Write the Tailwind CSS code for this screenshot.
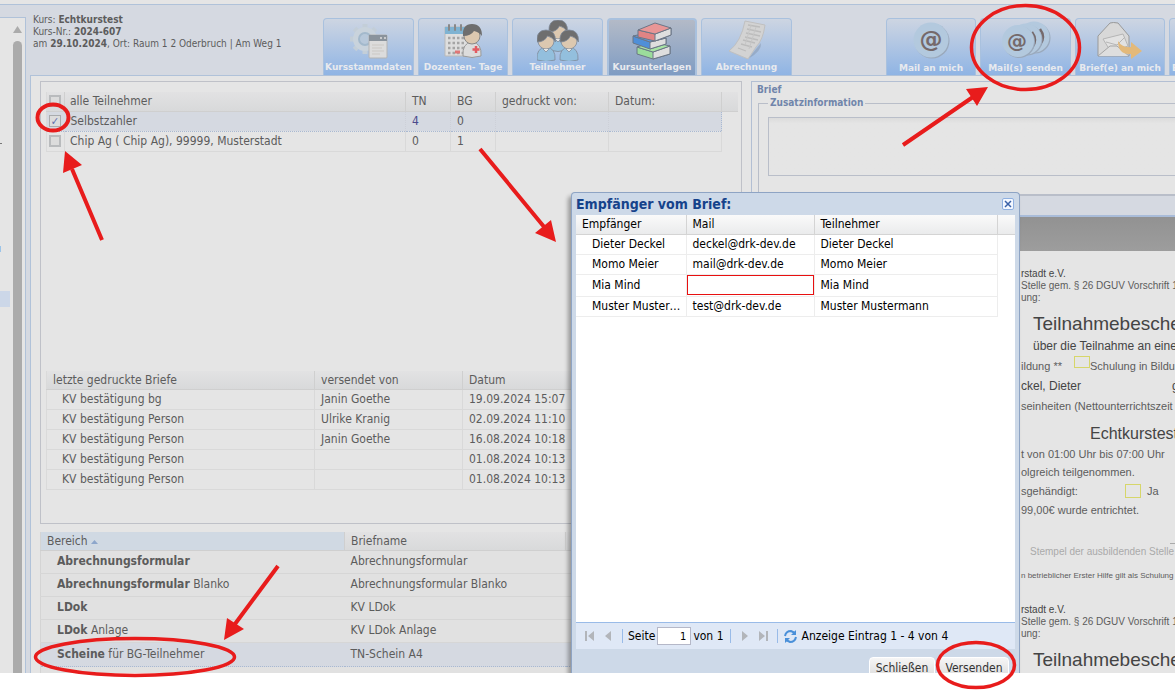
<!DOCTYPE html>
<html lang="de">

<head>
    <meta charset="UTF-8">
    <meta name="viewport" content="width=device-width, initial-scale=1.0">
    <title>Kursunterlagen</title>
    <script src="https://cdn.jsdelivr.net/npm/@tailwindcss/browser@4"></script>
</head>

<body class="bg-white font-['DejaVu_Sans_Condensed','DejaVu_Sans',sans-serif] text-xs text-[#5c5c5c] overflow-hidden">
    <div class="relative flex flex-col h-[calc(100vh-17px)] overflow-hidden bg-[#d5d9e1]">
        <div class="h-[5px] shrink-0 bg-[#e5e5e5] border-b border-[#b0c2d9]"></div>

        <div class="flex flex-1 min-h-0">
            <!-- Navigation -->
            <aside class="flex justify-between w-[26px] shrink-0 mt-3 bg-[#e5e5e5] border-t border-r border-[#b0c2d9]">
                <div class="w-[10px]">
                    <div class="w-[2px] h-px mt-[125px] bg-[#777]"></div>
                    <div class="w-px h-[6px] mt-[102px] bg-[#9cc4e8]"></div>
                    <div class="h-4 mt-[39px] bg-[#ccd7e8]"></div>
                </div>
                <div class="flex flex-col w-[9px] mr-[3px] pt-2">
                    <svg class="w-[9px] h-[7px]" viewBox="0 0 9 7"><path d="M4.5 0 L9 7 H0Z" fill="#ababab" /></svg>
                    <div class="flex-1 mt-2 bg-[#ababab] rounded-t-full"></div>
                </div>
            </aside>

            <main class="flex flex-col flex-1 min-w-0 pl-1">
                <header class="flex h-[70px] shrink-0 items-end overflow-hidden">
                    <div class="w-[293px] shrink-0 self-start pt-[9px] pl-[3px] text-[10px] leading-3 whitespace-nowrap">
                        <p>Kurs: <b>Echtkurstest</b></p>
                        <p>Kurs-Nr.: <b>2024-607</b></p>
                        <p>am <b>29.10.2024</b>, Ort: Raum 1 2 Oderbruch | Am Weg 1</p>
                    </div>
                    <nav class="flex shrink-0 gap-1 font-['DejaVu_Sans',sans-serif] font-bold text-[9px] leading-3 text-[#e8eaee]">
                        <button class="flex flex-col items-center justify-between w-[91px] h-[57px] pt-1 pb-[2px] border border-b-0 border-[#a9c1de] rounded-t-sm bg-linear-to-b from-[#cdd5e2] to-[#8fb4e4] whitespace-nowrap">
                            <svg class="w-[38px] h-[36px]" viewBox="0 0 38 36">
                                <path d="M15 1v30M0 16h30M4.500 5.500l21 21M25.500 5.500l-21 21" stroke="#c3ced8" stroke-width="5" />
                                <circle cx="15" cy="16" r="9" fill="#b7c8da" stroke="#c9d3dc" stroke-width="6" />
                                <circle cx="15" cy="16" r="6" fill="none" stroke="#a3b9cc" stroke-width="2" />
                                <rect x="19" y="12" width="18" height="23" rx="1" fill="#dcdcdc" stroke="#b4b4b4" />
                                <path d="M19 12h18v6H19z" fill="#8a939c" />
                                <path d="M30 15h2m2 0h2" stroke="#ddd" stroke-width="1.5" />
                                <path d="M22 22h12M22 25h10M22 28h12M22 31h8" stroke="#cbc8c4" />
                            </svg>
                            <span>Kursstammdaten</span>
                        </button>
                        <button class="flex flex-col items-center justify-between w-[90px] h-[57px] pt-1 pb-[2px] border border-b-0 border-[#a9c1de] rounded-t-sm bg-linear-to-b from-[#cdd5e2] to-[#8fb4e4] whitespace-nowrap">
                            <svg class="w-[38px] h-[36px]" viewBox="0 0 38 36">
                                <path d="M1 4h24v29H1z" fill="#dedede" stroke="#b9b9b9" />
                                <path d="M1 4h24v7H1z" fill="#7fb3d2" />
                                <path d="M5 2v5M11 2v5M17 2v5" stroke="#888" stroke-width="2" stroke-linecap="round" />
                                <path d="M4 15h16M4 20h16M4 25h16M4 30h16" stroke="#a5a5a5" stroke-width="2.500" stroke-dasharray="2.5 2" />
                                <path d="M11 29h5" stroke="#e07676" stroke-width="3" />
                                <path d="M19 33q-1-13 9-14 10 1 9 14-9 3-18 0z" fill="#dcdcdc" stroke="#999" />
                                <circle cx="28" cy="13" r="8" fill="#dcc8b0" stroke="#888" />
                                <path d="M19 13q-1-12 9-12t10 12q-3-4-8-5-3 5-11 5z" fill="#6e6e6e" />
                                <path d="M32 23v7M28.500 26.500h7" stroke="#e25b62" stroke-width="2.500" />
                            </svg>
                            <span>Dozenten- Tage</span>
                        </button>
                        <button class="flex flex-col items-center justify-between w-[91px] h-[57px] pt-px pb-[2px] border border-b-0 border-[#a9c1de] rounded-t-sm bg-linear-to-b from-[#cdd5e2] to-[#8fb4e4] whitespace-nowrap">
                            <svg class="w-[42px] h-[41px]" viewBox="0 0 42 41">
                                <g id="person" stroke="#808a99" stroke-width=".8">
                                    <path d="M12 30q-1-12 9-13 10 1 9 13-9 3-18 0z" fill="#93bfdd" />
                                    <circle cx="21" cy="11" r="8" fill="#dcc8b0" />
                                    <path d="M12 12q-1-12 9-12t9.500 12q-3-5-8-6-3 6-10.500 6z" fill="#6e6e6e" />
                                    <path d="M18 19l3 3 3-3" fill="#e5e5e5" />
                                </g>
                                <use href="#person" x="-12" y="10" />
                                <use href="#person" x="11" y="10" />
                            </svg>
                            <span>Teilnehmer</span>
                        </button>
                        <button class="flex flex-col items-center justify-between w-[90px] h-[57px] pt-[2px] pb-[2px] border-2 border-b-0 border-[#a9c1de] rounded-t-sm bg-linear-to-b from-[#b3bac7] to-[#7f9cc3] whitespace-nowrap">
                            <svg class="w-[40px] h-[38px]" viewBox="0 0 40 38">
                                <g stroke="#6b7686" stroke-width="1" stroke-linejoin="round">
                                    <path d="M5 25l16 5 17-6v8l-17 5-16-5z" fill="#9bdc9b" />
                                    <path d="M21 30l17-6v8l-17 5z" fill="#dedede" />
                                    <path d="M5 25l15-5 18 4-17 6z" fill="#a8e4a4" />
                                    <path d="M1 14l17 6 16-4v6l-16 5-17-6z" fill="#4f8fd8" />
                                    <path d="M18 20l16-4v6l-16 5z" fill="#dedede" />
                                    <path d="M1 14l14-3 19 5-16 4z" fill="#5d9ce0" />
                                    <path d="M6 8l17 4 16-6v7l-16 6-17-4z" fill="#e08484" />
                                    <path d="M23 12l16-6v7l-16 6z" fill="#dedede" />
                                    <path d="M6 8l17-7 16 5-16 6z" fill="#e89696" />
                                </g>
                            </svg>
                            <span>Kursunterlagen</span>
                        </button>
                        <button class="flex flex-col items-center justify-between w-[91px] h-[57px] pt-px pb-[2px] border border-b-0 border-[#a9c1de] rounded-t-sm bg-linear-to-b from-[#cdd5e2] to-[#8fb4e4] whitespace-nowrap">
                            <svg class="w-[38px] h-[40px]" viewBox="0 0 38 40">
                                <path d="M20 39q14-8 13-16z" fill="#8595ab" opacity=".5" />
                                <path d="M17 1l20 4q-2 15-9 22-4 6-8 12L1 31q12-9 16-30z" fill="#d3d3d3" stroke="#c0c0c0" />
                                <path d="M20 5l12 2M19 9l14 3M18 13l14 3M17 17l13 3M15 20l12 3M13 24l11 3M10 28l8 3" stroke="#bcbcbc" stroke-width="1.300" />
                                <path d="M28 7l-7 22M23 5l-6 20" stroke="#c6c6c6" />
                            </svg>
                            <span>Abrechnung</span>
                        </button>
                    </nav>
                    <nav class="flex shrink-0 gap-1 ml-[94px] font-['DejaVu_Sans',sans-serif] font-bold text-[9px] leading-3 text-[#e8eaee]">
                        <button class="flex flex-col items-center justify-between w-[90px] h-[57px] pt-[2px] pb-px border border-b-0 border-[#a9c1de] rounded-t-sm bg-linear-to-b from-[#cdd5e2] to-[#8fb4e4] whitespace-nowrap">
                            <svg class="w-[38px] h-[38px]" viewBox="0 0 38 38">
                                <circle cx="20" cy="20" r="17.500" fill="#9aa9bc" />
                                <circle cx="19" cy="19" r="17.500" fill="#b3c9de" />
                                <text x="19" y="26" text-anchor="middle" font-size="23" fill="#75696b">@</text>
                            </svg>
                            <span>Mail an mich</span>
                        </button>
                        <button class="flex flex-col items-center justify-between w-[91px] h-[57px] pt-[2px] pb-px border border-b-0 border-[#a9c1de] rounded-t-sm bg-linear-to-b from-[#cdd5e2] to-[#8fb4e4] whitespace-nowrap">
                            <svg class="w-[50px] h-[38px]" viewBox="0 0 50 38">
                                <circle cx="34" cy="17" r="15.500" fill="#9aa9bc" />
                                <circle cx="33" cy="16" r="15.500" fill="#b3c9de" />
                                <path d="M39 8q6 8 0 16" fill="none" stroke="#75696b" stroke-width="2.500" />
                                <circle cx="26" cy="19" r="15.500" fill="#9aa9bc" />
                                <circle cx="25" cy="18" r="15.500" fill="#b3c9de" />
                                <path d="M31 11q6 8 0 16" fill="none" stroke="#75696b" stroke-width="2.500" />
                                <circle cx="18" cy="21" r="16" fill="#9aa9bc" />
                                <circle cx="17" cy="20" r="16" fill="#b3c9de" />
                                <text x="16" y="27" text-anchor="middle" font-size="20" fill="#75696b">@</text>
                            </svg>
                            <span>Mail(s) senden</span>
                        </button>
                        <button class="flex flex-col items-center justify-between w-[90px] h-[57px] pt-[2px] pb-px border border-b-0 border-[#a9c1de] rounded-t-sm bg-linear-to-b from-[#cdd5e2] to-[#8fb4e4] whitespace-nowrap">
                            <svg class="w-[46px] h-[38px]" viewBox="0 0 46 38">
                                <path d="M1 15L13 2q3-1 8 0l11 13v20H1z" fill="#d8d8d8" stroke="#999" />
                                <path d="M6 18l20-5 5 12-17 6z" fill="#e2e2e2" stroke="#b5b5b5" />
                                <path d="M9 21l11 3 8-8" fill="none" stroke="#b5b5b5" />
                                <path d="M1 35l12-10h7l12 10" fill="#dedede" stroke="#a5a5a5" />
                                <path d="M21 20q4 7 13 6v-5l11 9-11 8v-5q-13 1-13-13z" fill="#e3b97a" />
                            </svg>
                            <span>Brief(e) an mich</span>
                        </button>
                        <button class="flex flex-col items-start justify-end w-[91px] h-[57px] pb-px pl-[2px] border border-b-0 border-[#a9c1de] rounded-t-sm bg-linear-to-b from-[#cdd5e2] to-[#8fb4e4] whitespace-nowrap">
                            <span>Brief(e) senden</span>
                        </button>
                    </nav>
                </header>

                <div class="flex flex-1 min-h-0 gap-[9px] pt-[5px] pl-[9px] bg-[#e5e5e5] border-t border-l border-[#b0c2d9]">
                    <!-- Teilnehmer und Briefe -->
                    <section class="flex flex-col w-[702px] shrink-0">
                        <div class="flex flex-col justify-between h-[443px] shrink-0 pt-[10px] pb-[33px] pl-[5px] border border-[#bfc1c8]">
                            <table class="table-fixed w-[691px] leading-[19px] border-l border-[#dadada]">
                                <colgroup>
                                    <col class="w-[18px]"><col class="w-[341px]"><col class="w-[45px]"><col class="w-[45px]"><col class="w-[113px]"><col class="w-[113px]"><col class="w-4">
                                </colgroup>
                                <thead class="bg-linear-to-b from-[#e2e2e3] to-[#d8d9da]">
                                    <tr class="h-[19px] text-left *:font-normal *:border-b *:border-[#cfcfcf] *:pl-[6px] *:py-0 *:leading-[18px]">
                                        <th class="pl-[2px]! border-r border-r-[#c6c6c6]"><input type="checkbox" aria-label="alle Teilnehmer" class="block appearance-none size-3 border-2 border-[#b9bbbd] bg-[#dcdcdc]"></th>
                                        <th class="pl-[5px]! border-r border-r-[#c6c6c6]">alle Teilnehmer</th>
                                        <th class="border-r border-r-[#c6c6c6]">TN</th>
                                        <th class="border-r border-r-[#c6c6c6]">BG</th>
                                        <th class="border-r border-r-[#c6c6c6]">gedruckt von:</th>
                                        <th class="border-r border-r-[#c6c6c6]">Datum:</th>
                                        <th></th>
                                    </tr>
                                </thead>
                                <tbody>
                                    <tr class="h-5 *:pl-[6px] *:py-0 *:border-y *:border-dotted *:border-y-[#a9b9d2]">
                                        <td class="pl-[2px]! bg-[#d5d9e1]"><input type="checkbox" checked aria-label="Selbstzahler" class="grid place-content-center appearance-none size-3 border border-[#a9abad] bg-[#dcdcdc] text-[11px] leading-none font-bold text-[#5c70ad] checked:before:content-['✓']"></td>
                                        <td class="bg-[#d5d9e1]">Selbstzahler</td>
                                        <td class="bg-[#d5d9e1] text-[#4a4a8c] border-l border-l-[#cdd0d8]">4</td>
                                        <td class="bg-[#d5d9e1] border-l border-l-[#cdd0d8]">0</td>
                                        <td class="bg-[#d5d9e1] border-l border-l-[#cdd0d8]"></td>
                                        <td class="bg-[#d5d9e1] border-x border-l-[#cdd0d8] border-r-[#a9b9d2]"></td>
                                        <td class="border-none!"></td>
                                    </tr>
                                    <tr class="h-5 *:pl-[6px] *:py-0 *:border-b *:border-[#d9d9d9]">
                                        <td class="pl-[2px]! border-r"><input type="checkbox" aria-label="Chip Ag" class="block appearance-none size-3 border-2 border-[#b9bbbd] bg-[#dcdcdc]"></td>
                                        <td class="pl-[5px]!">Chip Ag ( Chip Ag), 99999, Musterstadt</td>
                                        <td class="border-l">0</td>
                                        <td class="border-l">1</td>
                                        <td class="border-l"></td>
                                        <td class="border-x"></td>
                                        <td class="border-none!"></td>
                                    </tr>
                                </tbody>
                            </table>

                            <table class="table-fixed w-[691px] leading-[19px] border-l border-[#dadada]">
                                <colgroup>
                                    <col class="w-[268px]"><col class="w-[148px]"><col>
                                </colgroup>
                                <thead class="bg-linear-to-b from-[#e2e2e3] to-[#d8d9da]">
                                    <tr class="h-[19px] text-left *:font-normal *:border-b *:border-[#cfcfcf] *:py-0 *:leading-[18px] *:pl-[6px]">
                                        <th class="border-r border-r-[#c6c6c6]">letzte gedruckte Briefe</th>
                                        <th class="border-r border-r-[#c6c6c6]">versendet von</th>
                                        <th>Datum</th>
                                    </tr>
                                </thead>
                                <tbody class="[&_td]:py-0 [&_td]:pl-[6px] [&_td]:border-b [&_td]:border-r [&_td]:border-[#d9d9d9]">
                                    <tr class="h-5"><td class="pl-[15px]!">KV bestätigung bg</td><td>Janin Goethe</td><td>19.09.2024 15:07</td></tr>
                                    <tr class="h-5"><td class="pl-[15px]!">KV bestätigung Person</td><td>Ulrike Kranig</td><td>02.09.2024 11:10</td></tr>
                                    <tr class="h-5"><td class="pl-[15px]!">KV bestätigung Person</td><td>Janin Goethe</td><td>16.08.2024 10:18</td></tr>
                                    <tr class="h-5"><td class="pl-[15px]!">KV bestätigung Person</td><td></td><td>01.08.2024 10:13</td></tr>
                                    <tr class="h-5"><td class="pl-[15px]!">KV bestätigung Person</td><td></td><td>01.08.2024 10:13</td></tr>
                                </tbody>
                            </table>
                        </div>

                        <table class="table-fixed w-full mt-2 leading-[19px] border-l border-[#d4d4d4]">
                            <colgroup>
                                <col class="w-[304px]"><col class="w-[221px]"><col>
                            </colgroup>
                            <thead class="bg-linear-to-b from-[#e2e2e3] to-[#d8d9da]">
                                <tr class="h-[18px] text-left *:font-normal *:border-b *:border-[#cfcfcf] *:py-0 *:leading-[18px] *:pl-[6px]">
                                    <th class="bg-[#d0d9e3] border-r border-r-[#a9c1e3]">Bereich <svg class="inline w-[7px] h-1" viewBox="0 0 7 4"><path d="M3.500 0L7 4H0z" fill="#8da6cb" /></svg></th>
                                    <th class="border-r border-r-[#c6c6c6]">Briefname</th>
                                    <th></th>
                                </tr>
                            </thead>
                            <tbody class="[&_td]:pt-px [&_td]:pb-[2px] [&_td]:pl-[6px] [&_td]:border-b [&_td]:border-[#d6d6d6] [&_td]:whitespace-nowrap">
                                <tr class="bg-[#e1e1e1]"><td class="pl-4!"><b>Abrechnungsformular</b></td><td>Abrechnungsformular</td><td></td></tr>
                                <tr class="bg-[#e1e1e1]"><td class="pl-4!"><b>Abrechnungsformular</b> Blanko</td><td>Abrechnungsformular Blanko</td><td></td></tr>
                                <tr class="bg-[#e1e1e1]"><td class="pl-4!"><b>LDok</b></td><td>KV LDok</td><td></td></tr>
                                <tr class="bg-[#e1e1e1]"><td class="pl-4!"><b>LDok</b> Anlage</td><td>KV LDok Anlage</td><td></td></tr>
                                <tr class="h-6 bg-[#d5d9e1] *:border-y *:border-dotted *:border-[#a9b9d2]!"><td class="pl-4!"><b>Scheine</b> für BG-Teilnehmer</td><td>TN-Schein A4</td><td></td></tr>
                                <tr class="bg-[#e1e1e1] *:pt-1!"><td class="pl-4!"><b>Scheine</b> für Selbstzahler</td><td>TN-Schein Selbstzahler</td><td></td></tr>
                            </tbody>
                        </table>
                    </section>

                    <!-- Brief -->
                    <section class="flex flex-col flex-1 min-w-0 border-t border-l border-[#b3bfd3]">
                        <h2 class="pl-[5px] font-bold text-[10px] leading-4 text-[#7185ab]">Brief</h2>
                        <fieldset class="h-[97px] shrink-0 ml-[6px] pl-[9px] border border-r-0 border-[#b9bec9]">
                            <legend class="px-[2px] font-bold text-[10px] leading-[10px] text-[#7185ab]"><label for="zusatz">Zusatzinformation</label></legend>
                            <textarea id="zusatz" class="block w-full h-[59px] mt-[9px] resize-none border border-r-0 border-[#b9bec9] bg-linear-to-b from-[#dcdcdc] to-[#e5e5e5] to-10%"></textarea>
                        </fieldset>
                        <div class="h-[22px] shrink-0 border-t border-b-2 border-t-[#b9bec9] border-b-[#a9bcd9] bg-[#d5d9e1]"></div>
                        <div class="h-[34px] shrink-0 bg-linear-to-b from-[#929292] to-[#9d9d9d]"></div>

                        <article class="pt-[17px] pl-[269px] font-['Liberation_Sans',Arial,sans-serif] text-[11px] whitespace-nowrap">
                            <p class="h-3 text-[10px] leading-3 text-[#444]">rstadt e.V.</p>
                            <p class="h-3 text-[10px] leading-3">Stelle gem. § 26 DGUV Vorschrift 1:</p>
                            <p class="h-3 text-[10px] leading-3">ung:</p>
                            <h1 class="h-6 mt-2 pl-3 text-[19px] leading-6 text-[#444]">Teilnahmebescheinigung</h1>
                            <p class="h-5 pl-3 text-xs leading-5 text-[#444]">über die Teilnahme an einer</p>
                            <p class="flex h-5 leading-5">ildung ** <span class="w-4 h-3 shrink-0 ml-3 border border-[#d6d66a]"></span>Schulung in Bildungs</p>
                            <p class="flex h-5 text-xs leading-5 text-[#444]"><span class="w-[151px] shrink-0">ckel, Dieter</span>geb.</p>
                            <p class="h-5 leading-5">seinheiten (Nettounterrichtszeit 9</p>
                            <h2 class="h-5 mt-2 pl-[69px] text-base leading-5 text-[#444]">Echtkurstest</h2>
                            <p class="h-5 leading-5">t von 01:00 Uhr bis 07:00 Uhr</p>
                            <p class="h-4 leading-4">olgreich teilgenommen.</p>
                            <p class="flex h-[22px] leading-[22px]"><span class="w-[104px] shrink-0">sgehändigt:</span><span class="w-4 h-[14px] shrink-0 mt-1 mr-[6px] border border-[#d6d66a]"></span>Ja</p>
                            <p class="h-4 leading-4">99,00€ wurde entrichtet.</p>
                            <div class="w-10 h-px mt-[25px] ml-[149px] bg-[#aaa]"></div>
                            <p class="h-4 pl-[9px] text-[10px] leading-4 text-[#aaa]">Stempel der ausbildenden Stelle</p>
                            <p class="h-4 mt-2 text-[8px] leading-4">n betrieblicher Erster Hilfe gilt als Schulung in</p>
                            <p class="h-3 mt-5 text-[10px] leading-3 text-[#444]">rstadt e.V.</p>
                            <p class="h-3 text-[10px] leading-3">Stelle gem. § 26 DGUV Vorschrift 1:</p>
                            <p class="h-3 text-[10px] leading-3">ung:</p>
                            <h1 class="h-6 mt-2 pl-3 text-[19px] leading-6 text-[#444]">Teilnahmebescheinigung</h1>
                        </article>
                    </section>
                </div>
            </main>
        </div>

        <!-- Empfänger-Dialog -->
        <div role="dialog" aria-labelledby="dialog-titel" class="absolute top-[192px] bottom-0 left-[571px] flex flex-col w-[449px] px-1 overflow-hidden rounded-t-sm border border-b-0 border-[#8ea4c4] bg-[#cdd9e8] text-black shadow-[-3px_4px_4px_#00000055]">
            <div class="flex h-[22px] shrink-0 items-center justify-between">
                <h2 id="dialog-titel" class="font-bold text-sm text-[#15428b]">Empfänger vom Brief:</h2>
                <button aria-label="Schließen" class="grid place-content-center size-3 mr-px rounded-xs border border-[#8fb0e0] bg-[#f4f8ff]">
                    <svg class="size-[8px]" viewBox="0 0 8 8"><path d="M1 1l6 6M7 1L1 7" stroke="#3b62a8" stroke-width="1.500" /></svg>
                </button>
            </div>
            <div class="flex-1 min-h-0 bg-white">
                <table class="table-fixed w-full leading-[19px]">
                    <colgroup>
                        <col class="w-[110px]"><col class="w-32"><col class="w-[183px]"><col>
                    </colgroup>
                    <thead class="bg-linear-to-b from-[#fafafa] to-[#eaebec]">
                        <tr class="h-[19px] text-left *:font-normal *:border-b *:border-[#d4d4d4] *:py-0 *:leading-[18px] *:pl-[6px]">
                            <th class="border-r">Empfänger</th>
                            <th class="border-r">Mail</th>
                            <th class="border-r">Teilnehmer</th>
                            <th></th>
                        </tr>
                    </thead>
                    <tbody class="[&_td]:py-0 [&_td]:pl-[6px] [&_td]:border-[#ededed]">
                        <tr class="h-5 *:not-last:border-b *:not-last:border-r"><td class="pl-4!">Dieter Deckel</td><td>deckel@drk-dev.de</td><td>Dieter Deckel</td><td></td></tr>
                        <tr class="h-5 *:not-last:border-b *:not-last:border-r"><td class="pl-4!">Momo Meier</td><td>mail@drk-dev.de</td><td>Momo Meier</td><td></td></tr>
                        <tr class="h-[22px] *:not-last:border-b *:not-last:border-r"><td class="pl-4!">Mia Mind</td><td class="pl-0!"><input type="email" aria-label="Mail von Mia Mind" class="block w-full h-5 border border-[#e81010]"></td><td>Mia Mind</td><td></td></tr>
                        <tr class="h-5 *:not-last:border-b *:not-last:border-r"><td class="pl-4! truncate">Muster Mustermann</td><td>test@drk-dev.de</td><td>Muster Mustermann</td><td></td></tr>
                    </tbody>
                </table>
            </div>
            <div class="flex h-[27px] shrink-0 items-center pl-2 border-t border-[#99bbe8] bg-[#dfe8f6]">
                <button aria-label="Erste Seite"><svg class="w-[11px] h-[10px]" viewBox="0 0 11 10"><path d="M1 0h2v10H1zM10 0v10L4 5z" fill="#b2b5ba" /></svg></button>
                <button aria-label="Vorige Seite" class="ml-[10px]"><svg class="w-[7px] h-[10px]" viewBox="0 0 7 10"><path d="M6 0v10L0 5z" fill="#b2b5ba" /></svg></button>
                <span class="w-px h-[14px] ml-[10px] bg-[#99bbe8]"></span>
                <label for="seite" class="ml-[5px]">Seite</label>
                <input id="seite" type="text" value="1" class="w-[34px] h-[18px] mx-[2px] pr-1 border border-[#b5b8c8] bg-white text-right text-[11px]">
                <span>von 1</span>
                <span class="w-px h-[14px] ml-[6px] bg-[#99bbe8]"></span>
                <button aria-label="Nächste Seite" class="ml-[10px]"><svg class="w-[7px] h-[10px]" viewBox="0 0 7 10"><path d="M1 0v10l6-5z" fill="#b2b5ba" /></svg></button>
                <button aria-label="Letzte Seite" class="ml-[10px]"><svg class="w-[11px] h-[10px]" viewBox="0 0 11 10"><path d="M1 0v10l6-5zM8 0h2v10H8z" fill="#b2b5ba" /></svg></button>
                <span class="w-px h-[14px] ml-[8px] bg-[#99bbe8]"></span>
                <button aria-label="Aktualisieren" class="ml-[6px]">
                    <svg class="size-[13px]" viewBox="0 0 13 13" fill="none" stroke="#4a90d9" stroke-width="2"><path d="M1 6q1-5 6-5l4 2M12 7q-1 5-6 5l-4-2" /><path d="M12 0v5H7zM1 13V8h5z" fill="#4a90d9" stroke="none" /></svg>
                </button>
                <span class="ml-[5px]">Anzeige Eintrag 1 - 4 von 4</span>
            </div>
            <div class="flex h-6 shrink-0 justify-end gap-1 pt-2 pr-[6px] text-[#333]">
                <button class="w-[66px] h-[22px] shrink-0 rounded-sm border border-white bg-linear-to-b from-[#f6f6f6] to-[#dcdcdc] leading-5">Schließen</button>
                <button class="w-[70px] h-[22px] shrink-0 rounded-sm border border-white bg-linear-to-b from-[#f6f6f6] to-[#dcdcdc] leading-5">Versenden</button>
            </div>
        </div>
    </div>

    <!-- Markierungen -->
    <svg class="absolute top-0 left-0 w-[1175px] h-[690px] pointer-events-none" viewBox="0 0 1175 690" fill="none" stroke="#e81c1c" stroke-width="4">
        <ellipse cx="53" cy="117.500" rx="15.500" ry="13" />
        <ellipse cx="1025.500" cy="47.500" rx="54" ry="42" stroke-width="3.500" />
        <ellipse cx="135" cy="657" rx="99.500" ry="18.500" stroke-width="3.500" />
        <ellipse cx="976" cy="665" rx="38.500" ry="22.500" stroke-width="3.500" />
        <path d="M102 240L72 169M480 149L545 228M903 145L973 97M278 566L235 624" />
        <path d="M65 151l-2 22 19-8zM556 242l-21-9 16-13zM988 87l-22 2 11 17zM224 640l3-22 17 11z" fill="#e81c1c" stroke="none" />
    </svg>
</body>

</html>
